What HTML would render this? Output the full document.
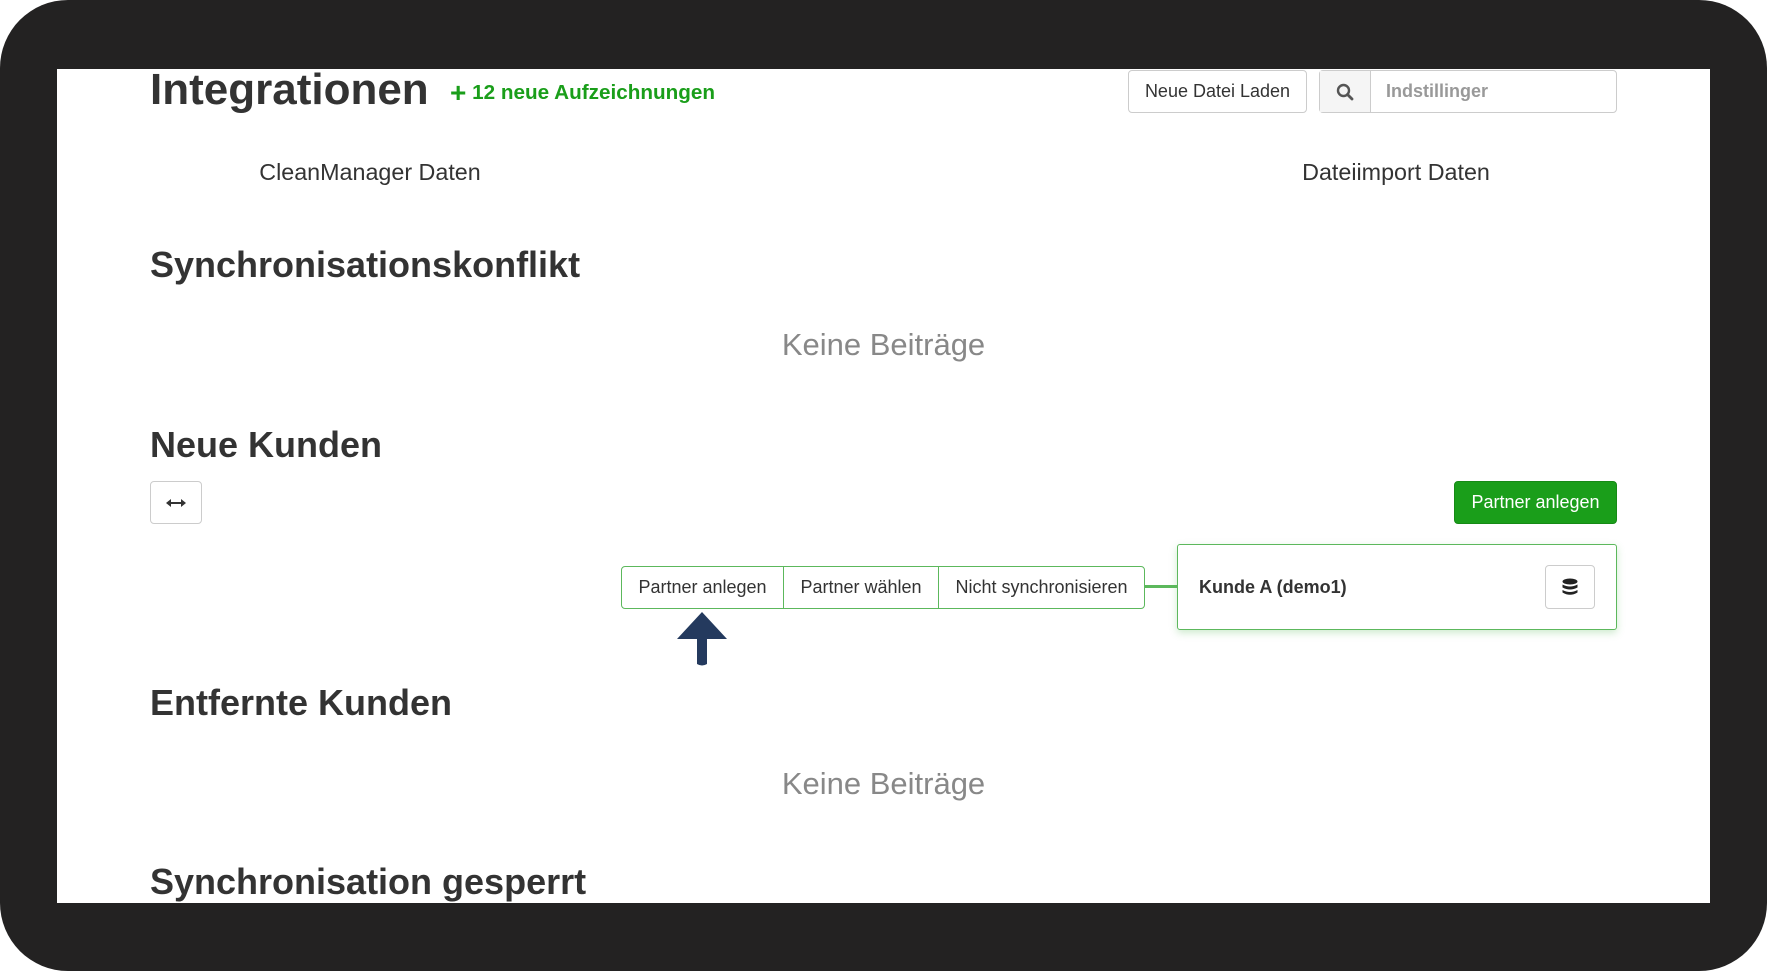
<!DOCTYPE html>
<html><head><meta charset="utf-8"><style>
*{box-sizing:border-box;margin:0;padding:0}
body{width:1767px;height:971px;background:#fff;font-family:"Liberation Sans",Arial,sans-serif;position:relative;overflow:hidden}
.frame{position:absolute;left:0;top:0;width:1767px;height:971px;background:#232222;border-radius:68px}
.page{position:absolute;left:57px;top:69px;width:1653px;height:834px;background:#fff;overflow:hidden}
.a{position:absolute;white-space:nowrap}
h1,h2{position:absolute;color:#333;font-weight:bold;white-space:nowrap}
h1{font-size:44px}
h2{font-size:36px}
.btn{position:absolute;border:1px solid #ccc;border-radius:4px;background:#fff;display:flex;align-items:center;justify-content:center;font-size:18px;color:#333}
.empty{position:absolute;width:100%;text-align:center;font-size:31px;color:#888}
</style></head><body>
<div class="frame"></div>
<div class="page">
<h1 style="left:93px;top:-4px">Integrationen</h1>
<div class="a" style="left:393px;top:8px;color:#1a9e1a;font-weight:bold;font-size:20.7px"><span style="font-size:28px;vertical-align:-3px">+</span> 12 neue Aufzeichnungen</div>
<div class="btn" style="left:1071px;top:1px;width:179px;height:43px">Neue Datei Laden</div>
<div class="btn" style="left:1262px;top:1px;width:298px;height:43px;justify-content:flex-start">
 <div style="width:51px;height:100%;background:#f5f5f5;border-right:1px solid #ccc;display:flex;align-items:center;justify-content:center">
 <svg width="18" height="18" viewBox="0 0 18 18"><circle cx="7.5" cy="7.5" r="5.5" fill="none" stroke="#555" stroke-width="2.4"/><path d="M11.5 11.5L16 16" stroke="#555" stroke-width="2.8" stroke-linecap="round"/></svg></div>
 <span style="margin-left:15px;color:#999;font-weight:bold">Indstillinger</span></div>
<div class="a" style="left:313px;top:90px;font-size:23.3px;color:#333;transform:translateX(-50%)">CleanManager Daten</div>
<div class="a" style="left:1339px;top:90px;font-size:23.3px;color:#333;transform:translateX(-50%)">Dateiimport Daten</div>
<h2 style="left:93px;top:175px">Synchronisationskonflikt</h2>
<div class="empty" style="left:0;top:258px">Keine Beiträge</div>
<h2 style="left:93px;top:355px">Neue Kunden</h2>
<div class="btn" style="left:93px;top:412px;width:52px;height:43px"><svg width="20" height="10" viewBox="0 0 20 10"><path d="M3 5H17" stroke="#333" stroke-width="2"/><path d="M0 5L5 1V9Z M20 5L15 1V9Z" fill="#333"/></svg></div>
<div class="btn" style="left:1397px;top:412px;width:163px;height:43px;background:#1a9e1a;border-color:#168a16;color:#fff">Partner anlegen</div>
<div style="position:absolute;left:564px;top:497px;width:524px;height:43px;border:1px solid #5cb85c;border-radius:4px;display:flex;font-size:18px;color:#333">
 <div style="width:162px;display:flex;align-items:center;justify-content:center;border-right:1px solid #5cb85c">Partner anlegen</div>
 <div style="width:155px;display:flex;align-items:center;justify-content:center;border-right:1px solid #5cb85c">Partner wählen</div>
 <div style="flex:1;display:flex;align-items:center;justify-content:center">Nicht synchronisieren</div>
</div>
<div style="position:absolute;left:1088px;top:516px;width:32px;height:3px;background:#5cb85c"></div>
<div style="position:absolute;left:1120px;top:475px;width:440px;height:86px;border:1px solid #5cb85c;border-radius:3px;box-shadow:0 3px 8px rgba(92,184,92,.3);background:#fff">
 <div class="a" style="left:21px;top:32px;font-size:18px;font-weight:bold;color:#333">Kunde A (demo1)</div>
 <div class="btn" style="left:367px;top:20px;width:50px;height:44px"><svg width="16" height="18" viewBox="0 0 16 18"><ellipse cx="8" cy="3.5" rx="7.5" ry="3" fill="#222"/><path d="M0.5 6.5Q8 10.5 15.5 6.5V9.5Q8 13.5 0.5 9.5Z M0.5 12Q8 16 15.5 12V14.5Q8 19 0.5 14.5Z" fill="#222"/></svg></div>
</div>
<svg style="position:absolute;left:620px;top:543px" width="50" height="54" viewBox="0 0 50 54"><path d="M25 0L50 27H30V52Q25 55 20 52V27H0Z" fill="#243a5e"/></svg>
<h2 style="left:93px;top:613px">Entfernte Kunden</h2>
<div class="empty" style="left:0;top:697px">Keine Beiträge</div>
<h2 style="left:93px;top:792px">Synchronisation gesperrt</h2>
</div>
</body></html>
